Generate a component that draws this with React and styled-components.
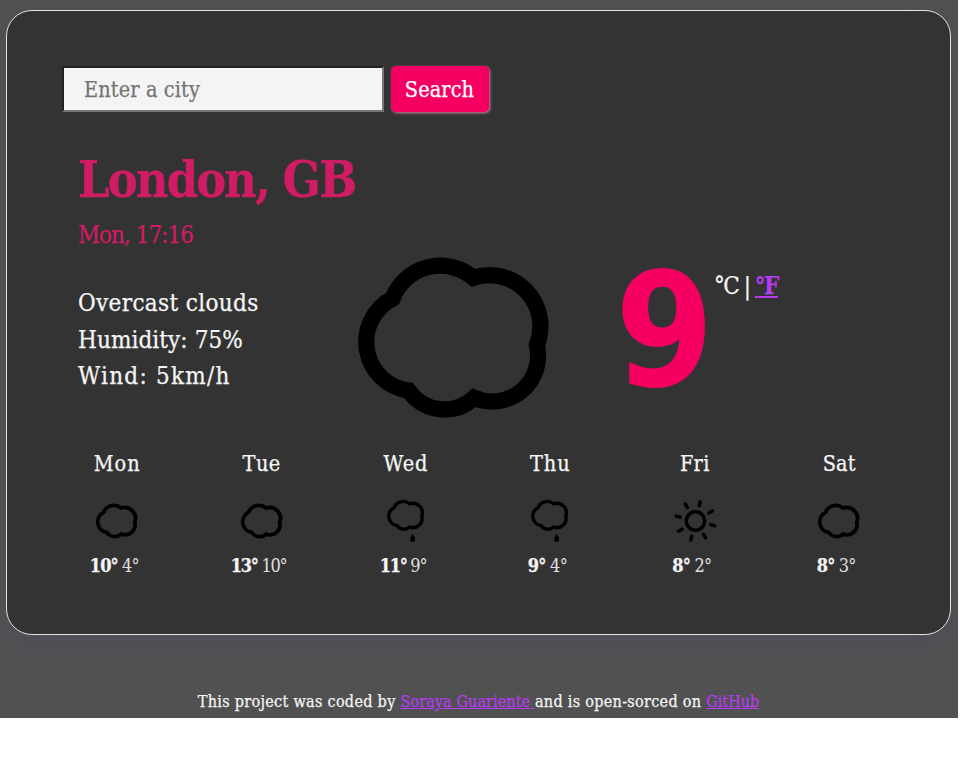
import React from "react";
import styled, { createGlobalStyle } from "styled-components";

const GlobalStyle = createGlobalStyle`
  *, *::before, *::after { box-sizing: border-box; }
  body {
    margin: 0;
    background: #fff;
    color: #f5f5f5;
    font-family: "Roboto Slab", "DejaVu Serif Condensed", "DejaVu Serif", serif;
    font-stretch: condensed;
    -webkit-text-stroke-width: 0.25px;
  }
`;

const Page = styled.div`
  width: 958px;
  height: 718px;
  padding: 10px 7px 0 6px;
  background: #515151;
  overflow: hidden;
`;

const Card = styled.main`
  height: 625px;
  padding: 55px 54px 0 55px;
  border: 1px solid #e4e4e4;
  border-radius: 26px;
  background: #333;
  box-shadow: 0 10px 40px rgba(80, 60, 140, 0.14);
`;

const SearchForm = styled.form`
  display: flex;
  align-items: flex-start;
  gap: 7px;
  height: 48px;
`;

const CityInput = styled.input`
  width: 322px;
  height: 46px;
  padding: 0 20px;
  border: 2px inset #767676;
  border-radius: 0;
  background: #f4f4f4;
  font-family: inherit;
  font-stretch: inherit;
  font-size: 21.5px;
  letter-spacing: ${(p) => p.$track}px;
  &::placeholder { color: #757575; opacity: 1; }
`;

const SearchButton = styled.button`
  width: 98px;
  height: 46px;
  padding: 0 1px 0 0;
  border: 0;
  border-radius: 5px;
  background: #f50062;
  color: #fff;
  font-family: inherit;
  font-stretch: inherit;
  font-size: 21.5px;
  letter-spacing: ${(p) => p.$track}px;
  box-shadow: 1px 1px 3px rgba(255, 150, 190, 0.8);
`;

const Heading = styled.header`
  padding: 38px 0 0 16px;
  color: #d01c64;
`;

const City = styled.h1`
  margin: 0;
  font-size: 50px;
  font-weight: 700;
  line-height: 56px;
  white-space: nowrap;
  letter-spacing: ${(p) => p.$track}px;
`;

const DateLine = styled.p`
  margin: 11px 0 0;
  font-size: 24px;
  line-height: 32px;
  letter-spacing: ${(p) => p.$track}px;
`;

const Current = styled.section`
  display: grid;
  grid-template-columns: 261px 280px 1fr;
  height: 190px;
  margin-top: -11px;
  padding-left: 16px;
`;

const Details = styled.ul`
  margin: 0;
  padding: 45px 0 0;
  list-style: none;
`;

const Detail = styled.li`
  height: 36.5px;
  font-size: 24px;
  line-height: 36px;
  white-space: nowrap;
  letter-spacing: ${(p) => p.$track}px;
`;

const Temperature = styled.div`
  display: flex;
  align-items: flex-start;
`;

const Degrees = styled.strong`
  width: 99px;
  margin-left: -4px;
  color: #f50062;
  font-family: "DejaVu Sans Condensed", "DejaVu Sans", sans-serif;
  font-size: 158px;
  font-weight: 700;
  line-height: 183px;
  -webkit-text-stroke-width: 0;
`;

const Units = styled.span`
  padding-top: 28px;
  font-size: 24px;
  line-height: 36px;
  white-space: nowrap;
  letter-spacing: ${(p) => p.$track}px;
`;

const Link = styled.a`
  color: #b53cf0;
  font-weight: ${(p) => (p.$strong ? 700 : 400)};
  text-decoration: underline;
  letter-spacing: ${(p) => p.$track}px;
`;

const Forecast = styled.section`
  display: grid;
  grid-template-columns: repeat(6, 144.4px);
  margin: 18px 0 0 -17px;
`;

const Day = styled.article`
  display: flex;
  flex-direction: column;
  align-items: center;
`;

const DayName = styled.div`
  font-size: 21.5px;
  line-height: 32px;
  letter-spacing: ${(p) => p.$track}px;
`;

const DayIcon = styled.div`
  height: 50px;
  margin-top: 16px;
`;

const DayTemps = styled.div`
  margin: 6px 6px 0 0;
  font-size: 18px;
  line-height: 28px;
  letter-spacing: ${(p) => p.$track}px;
`;

const Low = styled.span`
  color: #e0e0e0;
  font-weight: 300;
  -webkit-text-stroke-width: 0;
`;

const Footer = styled.footer`
  padding-top: 55px;
  font-size: 16px;
  line-height: 24px;
  text-align: center;
  white-space: pre;
  letter-spacing: ${(p) => p.$track}px;
`;

const CLOUD =
  "M70 150A49 49 0 0 1 54 58A51 51 0 0 1 134.7 37.3A51 51 0 0 1 198.3 104.3A46 46 0 0 1 135.5 157.3A43.5 43.5 0 0 1 70 150Z";

function BigCloud() {
  return (
    <svg width="230" height="190" viewBox="0.4 -0.5 230 190" fill="none" stroke="#000" strokeWidth="16.2">
      <path d={CLOUD} />
    </svg>
  );
}

function CloudIcon() {
  return (
    <svg width="50" height="50" viewBox="0 0 50 50" fill="none" stroke="#000" strokeWidth="17">
      <path transform="translate(-.3 3.9) scale(.217)" d={CLOUD} />
    </svg>
  );
}

function RainIcon() {
  return (
    <svg width="50" height="50" viewBox="0 0 50 50" fill="none" stroke="#000" strokeWidth="17.5">
      <path transform="translate(2.5 .6) scale(.193)" d={CLOUD} />
      <path d="M31.6 37.4C32.9 40 34.1 41.5 34.1 43.2Q34.1 45.8 31.6 45.8T29.1 43.2C29.1 41.5 30.3 40 31.6 37.4Z" fill="#000" stroke="none" />
    </svg>
  );
}

const RAYS = [14, 59, 104, 149, 194, 239, 284, 329];

function SunIcon() {
  return (
    <svg width="50" height="50" viewBox="-0.5 0 50 50" fill="none" stroke="#000" strokeWidth="3.4" strokeLinecap="round">
      <circle cx="25" cy="25" r="9.2" />
      {RAYS.map((a) => (
        <path key={a} d="M40.6 25H44.8" transform={`rotate(${a} 25 25)`} />
      ))}
    </svg>
  );
}

const days = [
  { name: "Mon", high: 10, low: 4, Icon: CloudIcon, nameTrack: 1, tempTrack: -0.9 },
  { name: "Tue", high: 13, low: 10, Icon: CloudIcon, nameTrack: 0.4, tempTrack: -1.25 },
  { name: "Wed", high: 11, low: 9, Icon: RainIcon, nameTrack: 1, tempTrack: -1.3 },
  { name: "Thu", high: 9, low: 4, Icon: RainIcon, nameTrack: 1, tempTrack: -0.7 },
  { name: "Fri", high: 8, low: 2, Icon: SunIcon, nameTrack: 0.3, tempTrack: -0.8 },
  { name: "Sat", high: 8, low: 3, Icon: CloudIcon, nameTrack: 0.1, tempTrack: -0.8 },
];

export default function App() {
  return (
    <>
      <GlobalStyle />
      <Page>
        <Card>
          <SearchForm>
            <CityInput placeholder="Enter a city" $track={0.12} />
            <SearchButton type="button" $track={0.1}>Search</SearchButton>
          </SearchForm>
          <Heading>
            <City $track={-1.9}>London, GB</City>
            <DateLine $track={-1}>Mon, 17:16</DateLine>
          </Heading>
          <Current>
            <Details>
              <Detail $track={0.35}>Overcast clouds</Detail>
              <Detail $track={0.08}>Humidity: 75%</Detail>
              <Detail $track={1.25}>Wind: 5km/h</Detail>
            </Details>
            <BigCloud />
            <Temperature>
              <Degrees>9</Degrees>
              <Units $track={-1.5}>
                °C | <Link href="#" $strong $track={-1.5}>°F</Link>
              </Units>
            </Temperature>
          </Current>
          <Forecast>
            {days.map(({ name, high, low, Icon, nameTrack, tempTrack }) => (
              <Day key={name}>
                <DayName $track={nameTrack}>{name}</DayName>
                <DayIcon><Icon /></DayIcon>
                <DayTemps $track={tempTrack}>
                  <b>{high}°</b> <Low>{low}°</Low>
                </DayTemps>
              </Day>
            ))}
          </Forecast>
        </Card>
        <Footer $track={0.31}>
          This project was coded by <Link href="#" $track={0.1}>Soraya Guariente </Link>and is open-sorced on <Link href="#" $track={0}>GitHub</Link>
        </Footer>
      </Page>
    </>
  );
}
